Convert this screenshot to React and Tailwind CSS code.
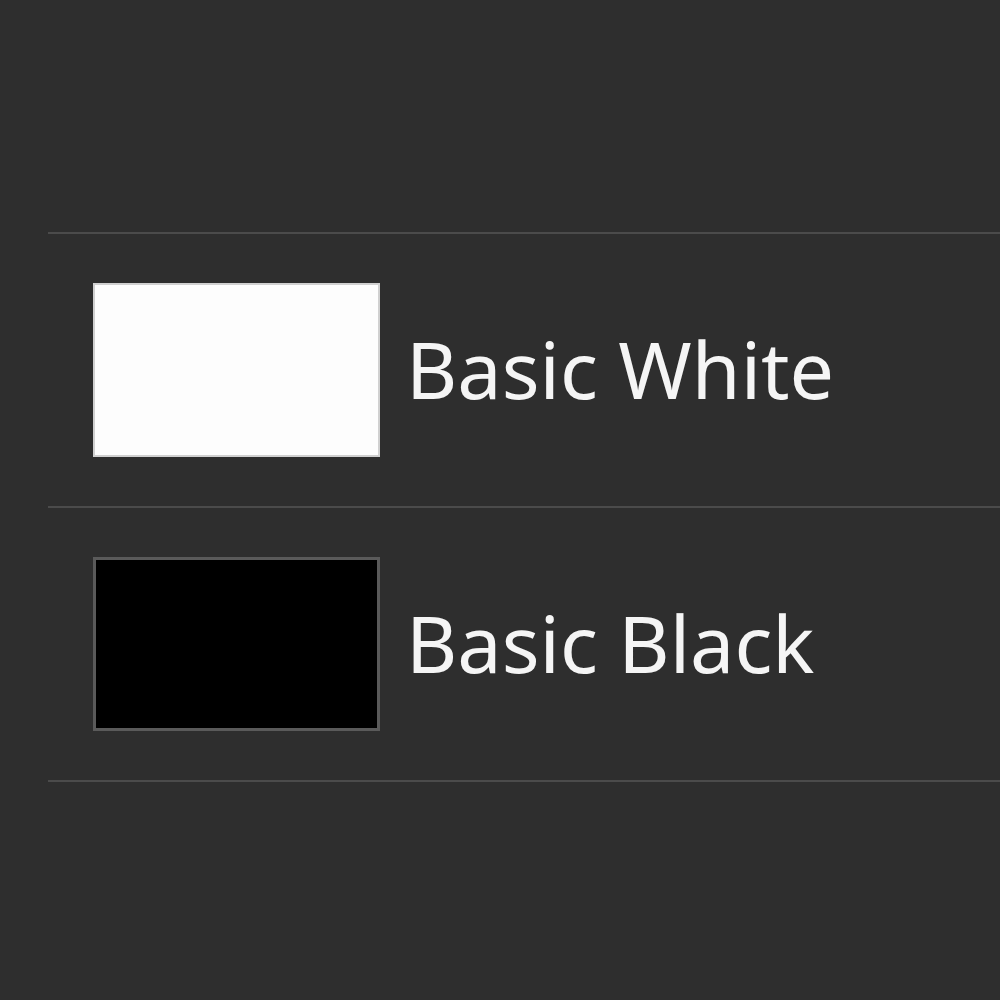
import React from 'react';

const swatches = [
  { name: 'Basic White', box: 'bg-[#fdfdfd] border-2 border-[#d0d0d0]' },
  { name: 'Basic Black', box: 'bg-black border-[3px] border-[#5a5a5a]' },
];

const App = () => {
  return (
    <div className="w-[1000px] h-[1000px] bg-[#2e2e2e] overflow-hidden" style={{ fontFamily: '"Noto Sans", "Open Sans", sans-serif' }}>
      <div className="pt-[232px] pl-[48px]">
        <ul className="border-t-2 border-[#4b4b4b]">
          {swatches.map((s) => (
            <li key={s.name} className="flex items-center py-[49px] border-b-2 border-[#4b4b4b]">
              <div className={`ml-[45px] w-[287px] h-[174px] ${s.box}`} />
              <span className="ml-[26px] text-[79px] leading-none text-[#f5f5f5] -mt-[4px]">
                {s.name}
              </span>
            </li>
          ))}
        </ul>
      </div>
    </div>
  );
};

export default App;
